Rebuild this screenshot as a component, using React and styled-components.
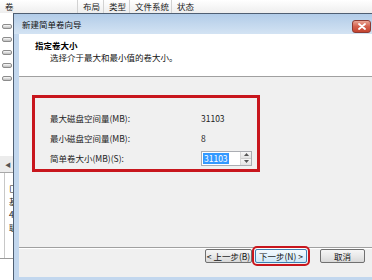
import React from 'react';
import styled, { createGlobalStyle } from 'styled-components';

const Global = createGlobalStyle`
  html, body { margin: 0; padding: 0; background: #fff; }
  body {
    width: 372px; height: 280px; overflow: hidden;
    font-family: "Noto Sans CJK SC", "Liberation Sans", sans-serif;
    font-size: 8.5px; color: #111;
  }
  * { box-sizing: border-box; }
`;

const Screen = styled.div`
  width: 372px; height: 280px; display: flex; flex-direction: column; overflow: hidden;
`;

const ColumnHeader = styled.div`
  height: 13px; flex: none; display: flex;
  background: linear-gradient(#ffffff, #eeeeee);
`;

const HeadCell = styled.div`
  width: ${p => (p.$w ? `${p.$w}px` : 'auto')};
  flex: ${p => (p.$w ? 'none' : '1')};
  padding-left: 5px;
  border-right: ${p => (p.$w ? '1px solid #d2d2d2' : 'none')};
  line-height: 13px; color: #222; white-space: nowrap; overflow: hidden;
`;

const Main = styled.div`
  flex: 1; display: flex; min-height: 0;
`;

const LeftStrip = styled.div`
  width: 13px; flex: none; display: flex; flex-direction: column;
  background: #fff; overflow: hidden;
`;

const DiskList = styled.div`
  padding-top: 7px; height: 143px; flex: none;
`;

const DiskRow = styled.div`
  height: 13px; display: flex; align-items: center; padding-left: 2px;
`;

const DiskIcon = styled.div`
  width: 10px; height: 5px; border-radius: 2px;
  border: 1px solid #8c8c8c;
  background: linear-gradient(#fafafa, #bdbdbd);
`;

const ScrollRow = styled.div`
  height: 17px; flex: none; display: flex; align-items: center; padding-left: 5px;
  background: #ececec; border-bottom: 1px solid #a8a8a8;
  font-size: 6px; color: #555;
`;

const MapChars = styled.div`
  height: 85px; flex: none; padding-top: 9px; padding-left: 8px;
  border-left: 1px solid #c8c8c8; margin-left: 4px;
  display: flex; flex-direction: column;
`;

const MapChar = styled.div`
  height: 13px; line-height: 13px; margin-left: -4px; white-space: nowrap; color: #222;
`;

const StripFoot = styled.div`
  flex: 1; border-top: 1px solid #9a9a9a;
`;

const Dialog = styled.div`
  flex: 1; display: flex; flex-direction: column;
  border-left: 1px solid #4f5f73; border-top: 1px solid #4f5f73;
  background: #c2d7ee;
`;

const TitleBar = styled.div`
  height: 20px; flex: none; display: flex; align-items: flex-start;
  padding-left: 8px; padding-right: 1px;
  background: linear-gradient(#b2cce8, #d3e3f3);
`;

const TitleText = styled.div`
  line-height: 21px; color: #111;
`;

const CloseBtn = styled.div`
  margin-left: auto; margin-top: 6px; width: 19px; height: 13px;
  border: 1px solid #8d3b33; border-radius: 3px;
  background: linear-gradient(#eaa493, #d4614d 50%, #c4432f);
  display: flex; align-items: center; justify-content: center;
`;

const Frame = styled.div`
  flex: 1; display: flex; padding: 0 0 3px 5px; min-height: 0;
`;

const Content = styled.div`
  flex: 1; display: flex; flex-direction: column; background: #f0f0f0;
`;

const WizardHeader = styled.div`
  height: 43px; flex: none; background: #fff; border-bottom: 1px solid #a0a0a0;
  padding: 5px 0 0 16px;
`;

const HeadTitle = styled.div`
  font-weight: bold; line-height: 12px; color: #000;
`;

const HeadSub = styled.div`
  line-height: 12px; padding-left: 15px; color: #111;
`;

const Body = styled.div`
  height: 170px; flex: none; padding: 18px 0 0 13px;
`;

const Highlight = styled.div`
  width: 228px; height: 77px; border: 3px solid #c8161d;
  padding: 10px 0 0 15px;
  display: grid; grid-template-columns: 151px 1fr; grid-auto-rows: 20px;
  align-items: center;
`;

const Label = styled.div`
  color: #222; white-space: nowrap;
`;

const Value = styled.div`
  color: #222;
`;

const SpinBox = styled.div`
  width: 51px; height: 15px; border: 1px solid #abadb3; background: #fff;
  display: flex; align-items: center; padding-left: 1px;
`;

const Selected = styled.span`
  background: #3399ff; color: #fff; line-height: 11px; padding: 0 1px;
`;

const SpinButtons = styled.div`
  margin-left: auto; width: 11px; height: 13px; display: flex; flex-direction: column;
  border-left: 1px solid #d6d6d6;
`;

const SpinHalf = styled.div`
  flex: 1; display: flex; align-items: center; justify-content: center;
  background: linear-gradient(#f7f7f7, #e3e3e3);
  border-bottom: ${p => (p.$top ? '1px solid #cfcfcf' : 'none')};
`;

const Footer = styled.div`
  flex: 1; border-top: 1px solid #a0a0a0;
  display: flex; justify-content: flex-end; align-items: flex-start;
  padding: 1px 7px 0 0;
  box-shadow: inset 0 1px 0 #fff;
`;

const Button = styled.div`
  height: 14px; width: ${p => p.$w}px; margin-left: ${p => p.$gap}px;
  border: 1px solid ${p => (p.$default ? '#3c7fb1' : '#707070')};
  border-radius: 2px;
  background: ${p => (p.$default
    ? 'linear-gradient(#f4fafd, #e3f2fb 50%, #cfe8f7)'
    : 'linear-gradient(#f6f6f6, #e9e9e9 50%, #d8d8d8)')};
  display: flex; align-items: center; justify-content: center;
  line-height: 12px; color: #111; white-space: nowrap;
  outline: ${p => (p.$marked ? '2px solid #c8161d' : 'none')};
  outline-offset: 1px;
`;

const disks = [0, 1, 2, 3, 4];

export default function App() {
  return (
    <>
      <Global />
      <Screen>
        <ColumnHeader>
          <HeadCell $w={78}>卷</HeadCell>
          <HeadCell $w={26}>布局</HeadCell>
          <HeadCell $w={26}>类型</HeadCell>
          <HeadCell $w={42}>文件系统</HeadCell>
          <HeadCell>状态</HeadCell>
        </ColumnHeader>
        <Main>
          <LeftStrip>
            <DiskList>
              {disks.map(d => (
                <DiskRow key={d}><DiskIcon /></DiskRow>
              ))}
            </DiskList>
            <ScrollRow>◀</ScrollRow>
            <MapChars>
              <MapChar>匚</MapChar>
              <MapChar>基</MapChar>
              <MapChar>4</MapChar>
              <MapChar>联</MapChar>
            </MapChars>
            <StripFoot />
          </LeftStrip>
          <Dialog>
            <TitleBar>
              <TitleText>新建简单卷向导</TitleText>
              <CloseBtn>
                <svg width="8" height="7" viewBox="0 0 8 7">
                  <path d="M1 1 L7 6 M7 1 L1 6" stroke="#fff" strokeWidth="1.8" strokeLinecap="round" />
                </svg>
              </CloseBtn>
            </TitleBar>
            <Frame>
              <Content>
                <WizardHeader>
                  <HeadTitle>指定卷大小</HeadTitle>
                  <HeadSub>选择介于最大和最小值的卷大小。</HeadSub>
                </WizardHeader>
                <Body>
                  <Highlight>
                    <Label>最大磁盘空间量(MB):</Label>
                    <Value>31103</Value>
                    <Label>最小磁盘空间量(MB):</Label>
                    <Value>8</Value>
                    <Label>简单卷大小(MB)(S):</Label>
                    <SpinBox>
                      <Selected>31103</Selected>
                      <SpinButtons>
                        <SpinHalf $top>
                          <svg width="5" height="3" viewBox="0 0 5 3"><path d="M0 3 L2.5 0 L5 3Z" fill="#555" /></svg>
                        </SpinHalf>
                        <SpinHalf>
                          <svg width="5" height="3" viewBox="0 0 5 3"><path d="M0 0 L2.5 3 L5 0Z" fill="#555" /></svg>
                        </SpinHalf>
                      </SpinButtons>
                    </SpinBox>
                  </Highlight>
                </Body>
                <Footer>
                  <Button $w={47} $gap={0}>&lt; 上一步(B)</Button>
                  <Button $w={52} $gap={3} $default $marked>下一步(N) &gt;</Button>
                  <Button $w={45} $gap={13}>取消</Button>
                </Footer>
              </Content>
            </Frame>
          </Dialog>
        </Main>
      </Screen>
    </>
  );
}
